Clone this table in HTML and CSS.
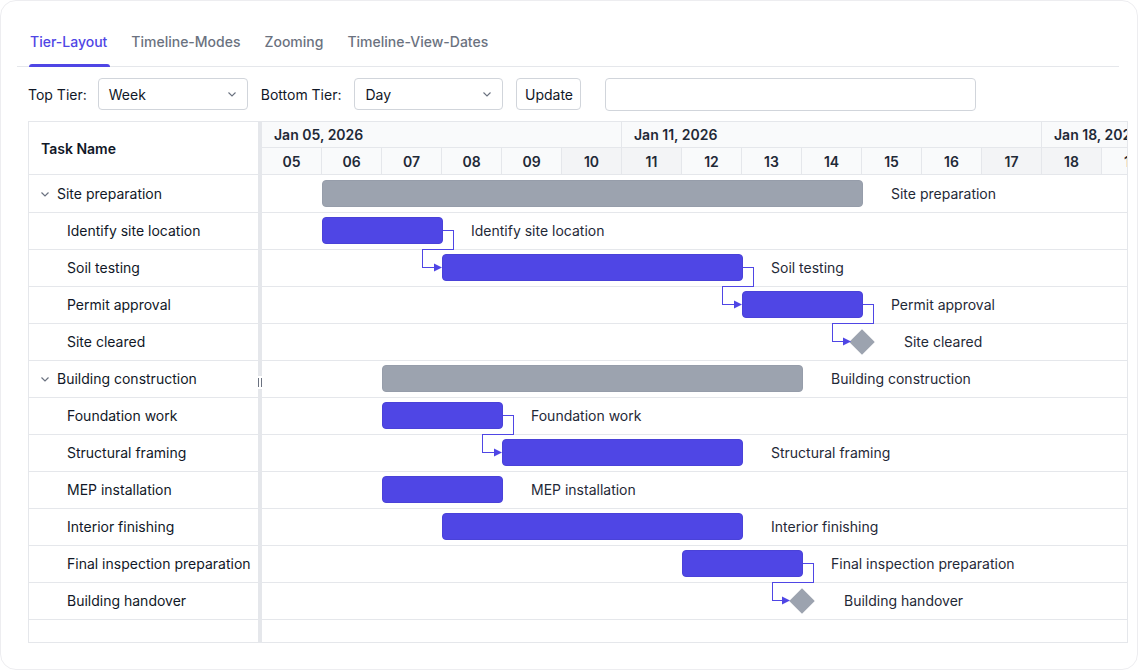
FILE: index.html
```html
<!DOCTYPE html>
<html>
<head>
<meta charset="utf-8">
<link rel="stylesheet" href="styles.css">
</head>
<body>
<div class="card">
  <div class="tabs">
    <div class="tab active">Tier-Layout</div>
    <div class="tab">Timeline-Modes</div>
    <div class="tab">Zooming</div>
    <div class="tab">Timeline-View-Dates</div>
  </div>

  <div class="toolbar">
    <span class="lbl">Top Tier:</span>
    <div class="select sel-top"><span>Week</span>
      <svg class="chev" width="10" height="10" viewBox="0 0 10 10"><path d="M1.5 3.5 L5 7 L8.5 3.5" fill="none" stroke="#6b7280" stroke-width="1.1"/></svg>
    </div>
    <span class="lbl lbl-bottom">Bottom Tier:</span>
    <div class="select sel-bottom"><span>Day</span>
      <svg class="chev" width="10" height="10" viewBox="0 0 10 10"><path d="M1.5 3.5 L5 7 L8.5 3.5" fill="none" stroke="#6b7280" stroke-width="1.1"/></svg>
    </div>
    <div class="btn">Update</div>
    <div class="input"></div>
  </div>

  <div class="gantt">
    <div class="left">
      <div class="lhead">Task Name</div>
      <div class="lrows">
        <div class="lrow parent"><svg class="tchev" width="10" height="10" viewBox="0 0 10 10"><path d="M1.5 3.5 L5 7 L8.5 3.5" fill="none" stroke="#6b7280" stroke-width="1.2"/></svg>Site preparation</div>
        <div class="lrow child">Identify site location</div>
        <div class="lrow child">Soil testing</div>
        <div class="lrow child">Permit approval</div>
        <div class="lrow child">Site cleared</div>
        <div class="lrow parent"><svg class="tchev" width="10" height="10" viewBox="0 0 10 10"><path d="M1.5 3.5 L5 7 L8.5 3.5" fill="none" stroke="#6b7280" stroke-width="1.2"/></svg>Building construction</div>
        <div class="lrow child">Foundation work</div>
        <div class="lrow child">Structural framing</div>
        <div class="lrow child">MEP installation</div>
        <div class="lrow child">Interior finishing</div>
        <div class="lrow child">Final inspection preparation</div>
        <div class="lrow child">Building handover</div>
      </div>
    </div>

    <div class="splitter"><span class="grip"></span></div>

    <div class="right">
      <div class="thead">
        <div class="tier top">
          <div class="tcell w6">Jan 05, 2026</div>
          <div class="tcell w7">Jan 11, 2026</div>
          <div class="tcell w7">Jan 18, 2026</div>
        </div>
        <div class="tier bottom">
          <div class="dcell">05</div>
          <div class="dcell">06</div>
          <div class="dcell">07</div>
          <div class="dcell">08</div>
          <div class="dcell">09</div>
          <div class="dcell wk">10</div>
          <div class="dcell wk">11</div>
          <div class="dcell">12</div>
          <div class="dcell">13</div>
          <div class="dcell">14</div>
          <div class="dcell">15</div>
          <div class="dcell">16</div>
          <div class="dcell wk">17</div>
          <div class="dcell wk">18</div>
          <div class="dcell">19</div>
        </div>
      </div>

      <div class="tbody">
        <div class="crow"><div class="bar gray" style="left:60px;width:541px"></div><span class="blabel" style="left:629px">Site preparation</span></div>
        <div class="crow"><div class="bar" style="left:60px;width:121px"></div><span class="blabel" style="left:209px">Identify site location</span></div>
        <div class="crow"><div class="bar" style="left:180px;width:301px"></div><span class="blabel" style="left:509px">Soil testing</span></div>
        <div class="crow"><div class="bar" style="left:480px;width:121px"></div><span class="blabel" style="left:629px">Permit approval</span></div>
        <div class="crow"><div class="diamond" style="left:591px"></div><span class="blabel" style="left:642px">Site cleared</span></div>
        <div class="crow"><div class="bar gray" style="left:120px;width:421px"></div><span class="blabel" style="left:569px">Building construction</span></div>
        <div class="crow"><div class="bar" style="left:120px;width:121px"></div><span class="blabel" style="left:269px">Foundation work</span></div>
        <div class="crow"><div class="bar" style="left:240px;width:241px"></div><span class="blabel" style="left:509px">Structural framing</span></div>
        <div class="crow"><div class="bar" style="left:120px;width:121px"></div><span class="blabel" style="left:269px">MEP installation</span></div>
        <div class="crow"><div class="bar" style="left:180px;width:301px"></div><span class="blabel" style="left:509px">Interior finishing</span></div>
        <div class="crow"><div class="bar" style="left:420px;width:121px"></div><span class="blabel" style="left:569px">Final inspection preparation</span></div>
        <div class="crow"><div class="diamond" style="left:531px"></div><span class="blabel" style="left:582px">Building handover</span></div>

        <svg class="links" width="900" height="470" viewBox="0 0 900 470">
          <g fill="none" stroke="#4f46e5" stroke-width="1" shape-rendering="crispEdges">
            <path d="M181 55.5 H191.5 V74.5 H160.5 V92.5 H173"/>
            <path d="M481 92.5 H491.5 V111.5 H460.5 V129.5 H473"/>
            <path d="M601 129.5 H611.5 V148.5 H570.5 V166.5 H582"/>
            <path d="M241 240.5 H251.5 V259.5 H220.5 V277.5 H233"/>
            <path d="M541 388.5 H551.5 V407.5 H510.5 V425.5 H521"/>
          </g>
          <g fill="#4f46e5">
            <polygon points="172,88.5 180,92.5 172,96.5"/>
            <polygon points="472,125.5 480,129.5 472,133.5"/>
            <polygon points="581,162.5 589,166.5 581,170.5"/>
            <polygon points="232,273.5 240,277.5 232,281.5"/>
            <polygon points="520,421.5 528,425.5 520,429.5"/>
          </g>
        </svg>
      </div>
    </div>
  </div>
</div>
</body>
</html>
```

FILE: styles.css
```css
* { box-sizing: border-box; }

body {
  margin: 0;
  background: #ffffff;
  font-family: Inter, "Noto Sans", "Liberation Sans", sans-serif;
  font-size: 14px;
  color: #111827;
}

.card {
  width: 1138px;
  height: 670px;
  border: 1px solid #ededf0;
  border-radius: 16px;
  padding: 0 10px 0 16px;
  overflow: hidden;
}

/* Tabs */
.tabs {
  display: flex;
  gap: 24px;
  height: 66px;
  margin-right: 8px;
  padding-left: 13px;
  border-bottom: 1px solid #e5e7eb;
}

.tab {
  position: relative;
  padding-top: 32px;
  line-height: 18px;
  color: #6b7280;
  font-weight: 500;
}

.tab.active {
  color: #4f46e5;
}

.tab.active::after {
  content: "";
  position: absolute;
  left: -1px;
  right: -3px;
  bottom: -1px;
  height: 3px;
  border-radius: 3px 3px 0 0;
  background: #4f46e5;
}

/* Toolbar */
.toolbar {
  display: flex;
  align-items: center;
  height: 32px;
  margin-top: 11px;
  padding-left: 11px;
}

.lbl { color: #111827; }
.lbl-bottom { margin-left: 13px; }

.select {
  display: flex;
  align-items: center;
  justify-content: space-between;
  height: 32px;
  padding: 0 10px 0 10px;
  border: 1px solid #d1d5db;
  border-radius: 4px;
  color: #111827;
}

.sel-top { width: 150px; margin-left: 11px; }
.sel-bottom { width: 149px; margin-left: 13px; }

.chev { display: block; }

.btn {
  display: flex;
  align-items: center;
  justify-content: center;
  width: 65px;
  height: 32px;
  margin-left: 13px;
  border: 1px solid #d1d5db;
  border-radius: 4px;
  color: #111827;
  font-weight: 400;
}

.input {
  width: 371px;
  height: 33px;
  margin-left: 24px;
  border: 1px solid #d1d5db;
  border-radius: 4px;
}

/* Gantt */
.gantt {
  display: flex;
  width: 1100px;
  height: 522px;
  margin-top: 11px;
  margin-left: 11px;
  border: 1px solid #e5e7eb;
  overflow: hidden;
}

.left {
  width: 229px;
  flex: none;
  display: flex;
  flex-direction: column;
}

.lhead {
  height: 53px;
  display: flex;
  align-items: center;
  padding-left: 12px;
  font-weight: 600;
  color: #111827;
  border-bottom: 1px solid #e5e7eb;
}

.lrows {
  padding-top: 1px;
}

.lrow {
  height: 37px;
  display: flex;
  align-items: center;
  padding-bottom: 1px;
  border-bottom: 1px solid #e5e7eb;
  color: #111827;
  white-space: nowrap;
}

.lrow.parent { padding-left: 11px; }
.lrow.child { padding-left: 38px; }

.tchev { margin-right: 7px; }

.splitter {
  position: relative;
  width: 4px;
  flex: none;
  background: #e5e7eb;
}

.grip {
  position: absolute;
  left: -1px;
  top: 254px;
  width: 6px;
  height: 13px;
  background: #ffffff;
}

.grip::before,
.grip::after {
  content: "";
  position: absolute;
  top: 2px;
  width: 1px;
  height: 9px;
  background: #6b7280;
}

.grip::before { left: 1px; }
.grip::after { left: 4px; }

.right {
  flex: 1;
  min-width: 0;
  overflow: hidden;
  display: flex;
  flex-direction: column;
}

.thead {
  width: 900px;
  background: #f9fafb;
}

.tier {
  display: flex;
  border-bottom: 1px solid #e5e7eb;
}

.tier.top { height: 26px; }
.tier.bottom { height: 27px; }

.tcell {
  flex: none;
  display: flex;
  align-items: center;
  padding-left: 12px;
  font-weight: 600;
  color: #1f2937;
  border-right: 1px solid #e5e7eb;
  white-space: nowrap;
}

.w6 { width: 360px; }
.w7 { width: 420px; }

.dcell {
  flex: none;
  width: 60px;
  display: flex;
  align-items: center;
  justify-content: center;
  font-weight: 600;
  color: #1f2937;
  border-right: 1px solid #e5e7eb;
}

.dcell.wk { background: #f3f4f6; }

.tbody {
  position: relative;
  width: 900px;
  flex: 1;
  padding-top: 1px;
}

.crow {
  position: relative;
  height: 37px;
  border-bottom: 1px solid #e5e7eb;
}

.bar {
  position: absolute;
  top: 4px;
  height: 27px;
  border-radius: 4px;
  background: #4f46e5;
  border: 1px solid #4a42d8;
}

.bar.gray {
  background: #9ca3af;
  border-color: #969daa;
}

.diamond {
  position: absolute;
  top: 9px;
  width: 18px;
  height: 18px;
  background: #9ca3af;
  transform: rotate(45deg);
}

.blabel {
  position: absolute;
  top: 0;
  line-height: 36px;
  color: #1f2937;
  white-space: nowrap;
}

.links {
  position: absolute;
  left: 0;
  top: 0;
  pointer-events: none;
}
```
